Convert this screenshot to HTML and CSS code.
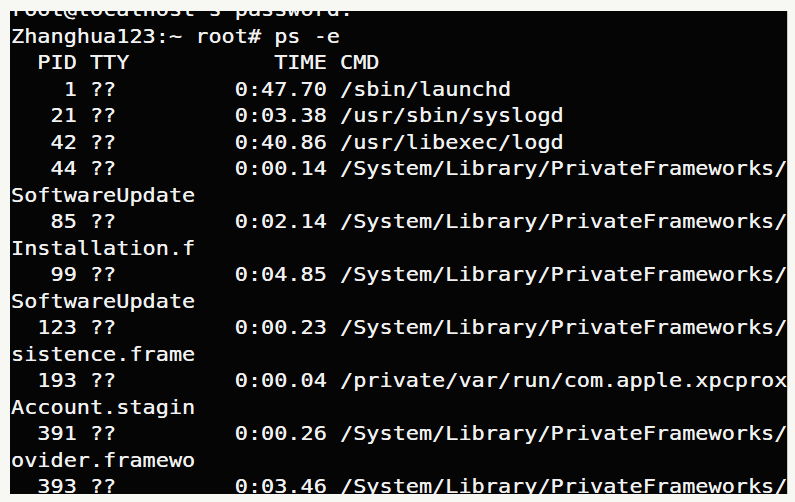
FILE: index.html
```
<!DOCTYPE html>
<html lang="en">
<head>
<meta charset="utf-8">
<title>ps -e</title>
<link rel="stylesheet" href="styles.css">
</head>
<body>
<div class="terminal">
<pre class="screen">root@localhost's password:
Zhanghua123:~ root# ps -e
  PID TTY           TIME CMD
    1 ??         0:47.70 /sbin/launchd
   21 ??         0:03.38 /usr/sbin/syslogd
   42 ??         0:40.86 /usr/libexec/logd
   44 ??         0:00.14 /System/Library/PrivateFrameworks/
SoftwareUpdate
   85 ??         0:02.14 /System/Library/PrivateFrameworks/
Installation.f
   99 ??         0:04.85 /System/Library/PrivateFrameworks/
SoftwareUpdate
  123 ??         0:00.23 /System/Library/PrivateFrameworks/
sistence.frame
  193 ??         0:00.04 /private/var/run/com.apple.xpcprox
Account.stagin
  391 ??         0:00.26 /System/Library/PrivateFrameworks/
ovider.framewo
  393 ??         0:03.46 /System/Library/PrivateFrameworks/</pre>
</div>
</body>
</html>
```
FILE: styles.css
```
html, body {
  margin: 0;
  padding: 0;
}

body {
  background: #f7f7f4;
  width: 795px;
  height: 502px;
  overflow: hidden;
}

.terminal {
  margin: 11px 0 0 10px;
  width: 777px;
  height: 483px;
  background: #050505;
  border-right: 1px solid #c9c9c6;
  overflow: hidden;
}

.screen {
  margin: -14px 0 0 1px;
  padding: 0;
  font-family: "DejaVu Sans Mono", "Liberation Mono", monospace;
  font-size: 19.8px;
  line-height: 26.5px;
  color: #f1f1f1;
  text-shadow: 0 0 0.6px #f1f1f1;
  white-space: pre;
  transform: scaleX(1.105);
  transform-origin: left top;
}
```
